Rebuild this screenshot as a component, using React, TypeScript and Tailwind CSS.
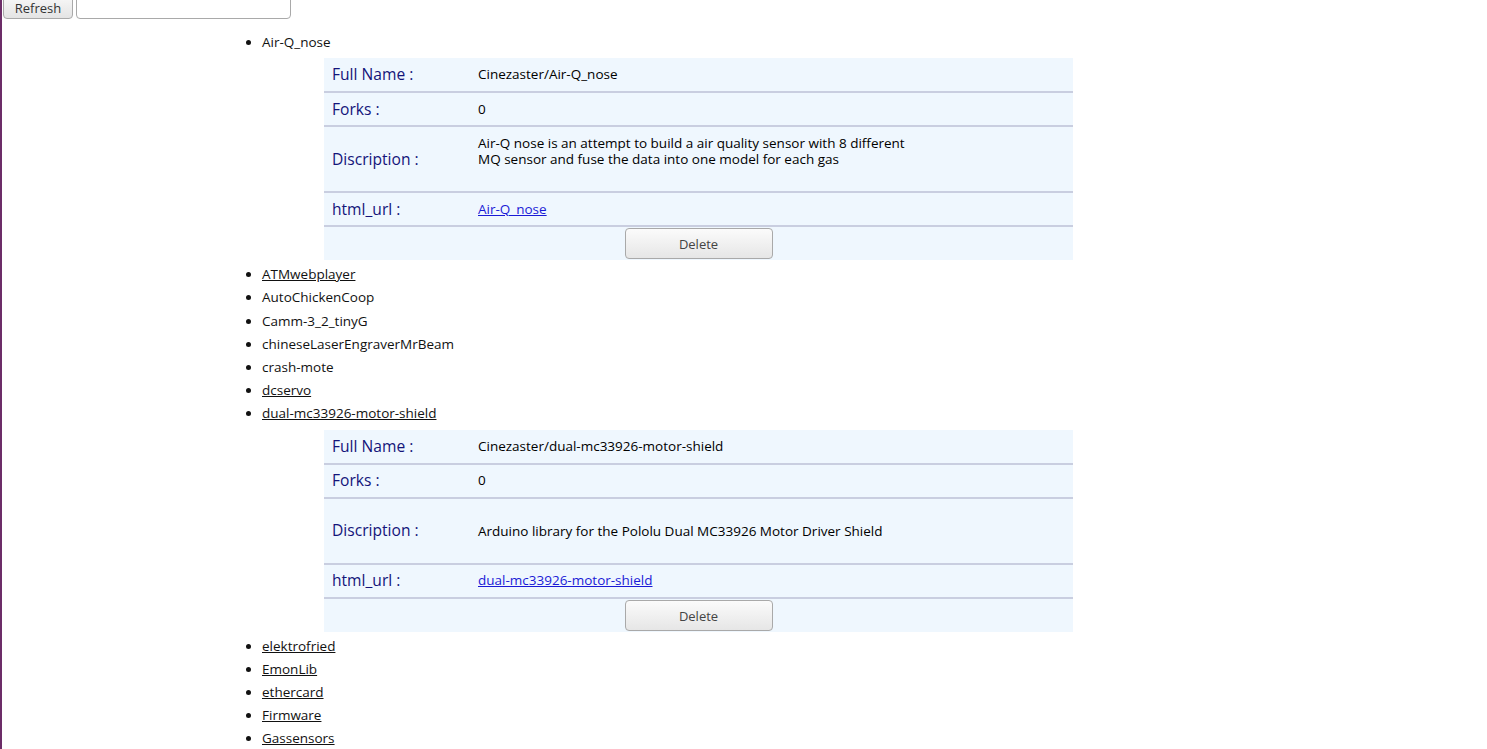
import React from 'react'

interface Repo {
  name: string
  fullName?: string
  forks?: number
  description?: string
  twoLines?: boolean
  underline: boolean
  open?: boolean
}

const repos: Repo[] = [
  {
    name: 'Air-Q_nose',
    fullName: 'Cinezaster/Air-Q_nose',
    forks: 0,
    description:
      'Air-Q nose is an attempt to build a air quality sensor with 8 different MQ sensor and fuse the data into one model for each gas',
    twoLines: true,
    underline: false,
    open: true,
  },
  { name: 'ATMwebplayer', underline: true },
  { name: 'AutoChickenCoop', underline: false },
  { name: 'Camm-3_2_tinyG', underline: false },
  { name: 'chineseLaserEngraverMrBeam', underline: false },
  { name: 'crash-mote', underline: false },
  { name: 'dcservo', underline: true },
  {
    name: 'dual-mc33926-motor-shield',
    fullName: 'Cinezaster/dual-mc33926-motor-shield',
    forks: 0,
    description: 'Arduino library for the Pololu Dual MC33926 Motor Driver Shield',
    underline: true,
    open: true,
  },
  { name: 'elektrofried', underline: true },
  { name: 'EmonLib', underline: true },
  { name: 'ethercard', underline: true },
  { name: 'Firmware', underline: true },
  { name: 'Gassensors', underline: true },
]

const font = { fontFamily: '"Open Sans", "Noto Sans", sans-serif' }

function Row({ label, children, h, last }: { label: string; children: React.ReactNode; h: string; last?: boolean }) {
  return (
    <div className={`flex items-center bg-[#eff7fe] ${h} ${last ? '' : 'border-b-2 border-[#c9cee0]'}`}>
      <div className="w-[154px] pl-[8px] text-[15.6px] text-[#14147a]">{label}</div>
      <div className="flex-1 text-[13.5px] text-black">{children}</div>
    </div>
  )
}

function Details({ repo }: { repo: Repo }) {
  return (
    <div className="ml-[62px] mt-[4px] mb-[3px] w-[749px]">
      <Row label="Full Name :" h="h-[35px]">
        {repo.fullName}
      </Row>
      <Row label="Forks :" h="h-[34px]">
        {repo.forks}
      </Row>
      <Row label="Discription :" h="h-[66px]">
        <p className={`w-[445px] leading-[16px] ${repo.twoLines ? 'mb-[16px]' : ''}`}>{repo.description}</p>
      </Row>
      <Row label="html_url :" h="h-[34px]">
        <a href="#" className="text-[#1a1ad6] underline">
          {repo.name}
        </a>
      </Row>
      <div className="flex h-[33px] items-center justify-center bg-[#eff7fe]">
        <button className="h-[31px] w-[148px] rounded-[4px] border border-[#a9a9a9] bg-gradient-to-b from-[#fbfbfb] to-[#e6e6e6] pt-[2px] text-[13px] text-[#444]">
          Delete
        </button>
      </div>
    </div>
  )
}

export default function App() {
  return (
    <div className="min-h-screen border-l-2 border-[#6c2d68] bg-white" style={font}>
      <div className="-mt-[8px] flex gap-[3px] pl-[1px]">
        <button className="h-[27px] w-[70px] rounded-[4px] border border-[#a9a9a9] bg-gradient-to-b from-[#fbfbfb] to-[#e4e4e4] pt-[6px] text-[13px] text-[#333]">
          Refresh
        </button>
        <input className="h-[27px] w-[215px] rounded-[4px] border border-[#a9a9a9] bg-white" />
      </div>
      <ul className="mt-[12px] list-disc pl-[260px] text-[13.5px] leading-[23.2px] text-[#111]">
        {repos.map((r) => (
          <li key={r.name}>
            <span className={r.underline ? 'underline' : ''}>{r.name}</span>
            {r.open && <Details repo={r} />}
          </li>
        ))}
      </ul>
    </div>
  )
}
